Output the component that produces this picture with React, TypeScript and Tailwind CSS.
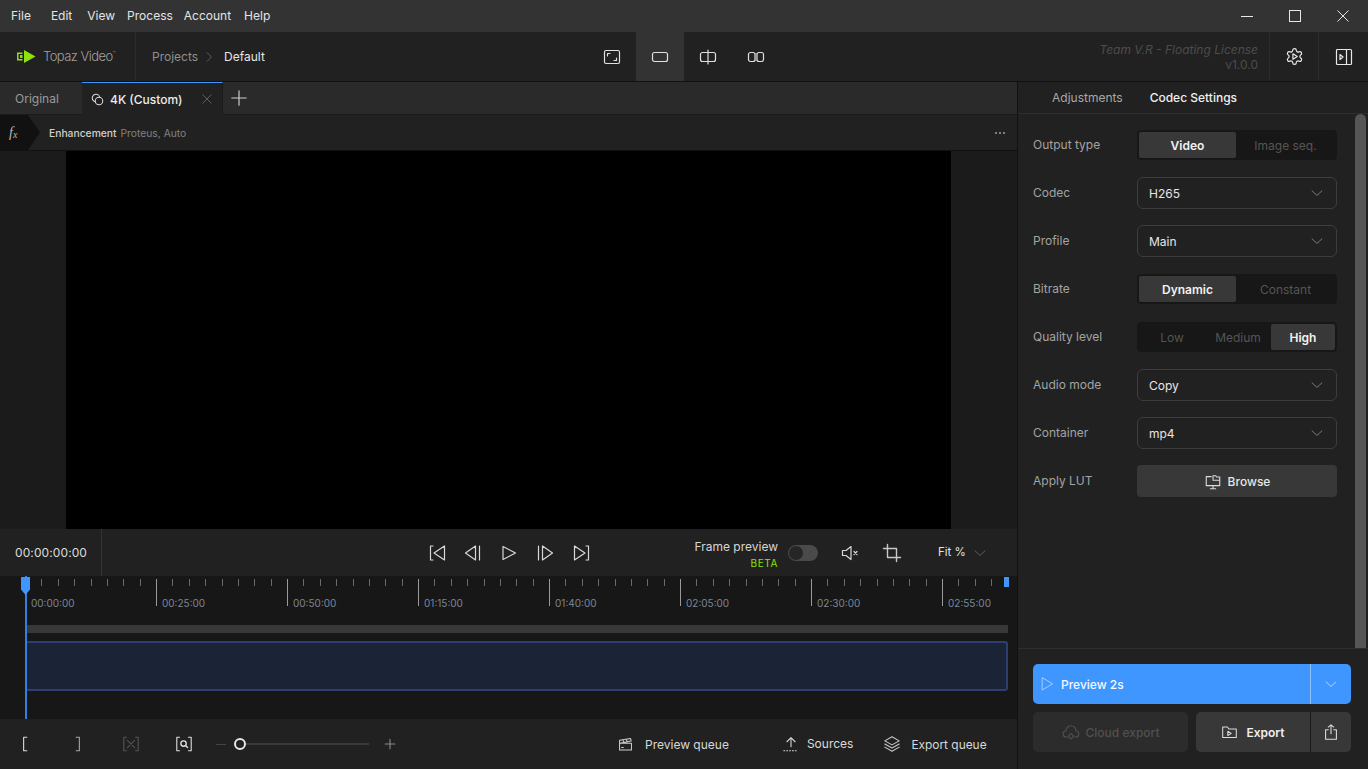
import { ReactNode } from "react";

function Icon({ size = 20, className = "", children }: { size?: number; className?: string; children: ReactNode }) {
  return (
    <svg width={size} height={size} viewBox="0 0 20 20" fill="none" stroke="currentColor" strokeWidth="1.2" strokeLinecap="round" strokeLinejoin="round" className={className}>
      {children}
    </svg>
  );
}

function Chevron({ className = "text-[#8a8a8a]" }: { className?: string }) {
  return (
    <Icon size={14} className={className}>
      <path d="M3 7l7 6.5L17 7" />
    </Icon>
  );
}

function Segmented({ items, active, w }: { items: string[]; active: string; w: string }) {
  return (
    <div className="flex h-[30px] w-[200px] items-center rounded-[4px] bg-[#171717] p-[2px]">
      {items.map((t) =>
        t === active ? (
          <div key={t} className={`flex h-[26px] items-center justify-center rounded-[2px] bg-[#383838] pt-[1px] font-semibold text-[#f2f2f2] ${w}`}>
            {t}
          </div>
        ) : (
          <div key={t} className="flex h-[26px] flex-1 items-center justify-center pt-[1px] text-[#555]">
            {t}
          </div>
        ),
      )}
    </div>
  );
}

function Dropdown({ value }: { value: string }) {
  return (
    <div className="flex h-[32px] w-[200px] items-center justify-between rounded-[6px] border border-[#3d3d3d] pl-[11px] pr-[12px] text-[#e6e6e6]">
      <span className="pt-[1px]">{value}</span>
      <Chevron />
    </div>
  );
}

function Row({ label, children }: { label: string; children: ReactNode }) {
  return (
    <div className="flex h-[48px] items-center pl-[15px]">
      <span className="w-[104px] text-[#a3a3a3]">{label}</span>
      {children}
    </div>
  );
}

const times = ["00:00:00", "00:25:00", "00:50:00", "01:15:00", "01:40:00", "02:05:00", "02:30:00", "02:55:00"];

function RulerCell({ label, first }: { label: string; first: boolean }) {
  return (
    <div className="relative flex h-[29px] w-[131px] shrink-0">
      <div className={`h-[27px] w-[16.375px] border-l ${first ? "border-transparent" : "border-[#9a9a9a]"}`}>
        <div className="whitespace-nowrap pl-[5px] pt-[17px] text-[10px] leading-[14px] text-[#7d8694]">{label}</div>
      </div>
      {[1, 2, 3, 4, 5, 6, 7].map((i) => (
        <div key={i} className="h-[7px] w-[16.375px] border-l border-[#6a6a6a]" />
      ))}
    </div>
  );
}

export default function App() {
  return (
    <div className="flex h-[769px] w-[1368px] flex-col overflow-hidden bg-[#212121] font-['Inter',sans-serif] text-[12px] text-[#e0e0e0]">
      {/* title bar */}
      <div className="flex h-[32px] shrink-0 items-center bg-[#333333] text-[12px] text-[#e4e4e4]">
        <span className="ml-[11px]">File</span>
        <span className="ml-[20px]">Edit</span>
        <span className="ml-[15px]">View</span>
        <span className="ml-[12px]">Process</span>
        <span className="ml-[11px]">Account</span>
        <span className="ml-[13px]">Help</span>
        <div className="ml-auto flex pr-[1px]">
          <div className="flex h-[32px] w-[48px] items-center justify-center">
            <div className="h-[1px] w-[12px] bg-[#e8e8e8]" />
          </div>
          <div className="flex h-[32px] w-[48px] items-center justify-center">
            <div className="h-[12px] w-[12px] border border-[#e8e8e8]" />
          </div>
          <div className="flex h-[32px] w-[48px] items-center justify-center text-[#e8e8e8]">
            <Icon size={14}>
              <path d="M2.5 2.5l15 15M17.5 2.5l-15 15" strokeWidth="1.4" />
            </Icon>
          </div>
        </div>
      </div>

      {/* header */}
      <div className="flex h-[50px] shrink-0 items-center border-b border-[#111]">
        <div className="flex h-full w-[136px] shrink-0 items-center border-r border-[#2c2c2c] pl-[17px]">
          <svg width="19" height="15" viewBox="0 0 19 15" fill="#8fe00c">
            <path d="M7 1L18.500 7.500 7 14z" />
            <path d="M0 3.500h5.500V5H1.500v5h4v1.500H0z" />
            <path d="M3 6h2.500v3H3z" />
          </svg>
          <span className="ml-[7px] pt-[1px] text-[13px] font-light tracking-[-0.55px] text-[#a0a0a0]">Topaz Video</span>
          <span className="mb-[6px] text-[5px] text-[#888]">™</span>
        </div>
        <span className="ml-[16px] pt-[1px] text-[#8f8f8f]">Projects</span>
        <Icon size={12} className="ml-[5px] text-[#777]">
          <path d="M7 3l7 7-7 7" />
        </Icon>
        <span className="ml-[9px] pt-[1px] text-[#e6e6e6]">Default</span>

        <div className="ml-[323px] flex h-full text-[#e0e0e0]">
          <div className="flex w-[48px] items-center justify-center">
            <Icon size={20}>
              <rect x="2.5" y="3.5" width="15" height="13" rx="1.5" />
              <path d="M5.5 9V6.5H8M14.5 11v2.5H12" />
            </Icon>
          </div>
          <div className="flex w-[48px] items-center justify-center bg-[#333333]">
            <Icon size={20}>
              <rect x="2.5" y="5.5" width="15" height="9" rx="2" />
            </Icon>
          </div>
          <div className="flex w-[48px] items-center justify-center">
            <Icon size={20}>
              <path d="M9.5 5.5H4.5a2 2 0 0 0-2 2v5a2 2 0 0 0 2 2h5M11 5.5h4.5a2 2 0 0 1 2 2v5a2 2 0 0 1-2 2H11M10 3v14" />
            </Icon>
          </div>
          <div className="flex w-[48px] items-center justify-center">
            <Icon size={20}>
              <rect x="2.5" y="5.5" width="6.5" height="9" rx="2" />
              <rect x="11" y="5.5" width="6.5" height="9" rx="2" />
              <rect x="9" y="6" width="2" height="8" fill="#9a9a9a" stroke="none" />
            </Icon>
          </div>
        </div>

        <div className="ml-auto flex h-full items-center">
          <div className="pr-[11px] pt-[1px] text-right text-[12px] leading-[15px] text-[#4c4c4c]">
            <div className="italic">Team V.R - Floating License</div>
            <div>v1.0.0</div>
          </div>
          <div className="flex h-full w-[49px] items-center justify-center border-l border-[#2c2c2c] text-[#e8e8e8]">
            <svg width="19" height="19" viewBox="0 0 24 24" fill="none" stroke="currentColor" strokeWidth="1.5" strokeLinejoin="round">
              <path d="M12.22 2h-.44a2 2 0 0 0-2 2v.18a2 2 0 0 1-1 1.73l-.43.25a2 2 0 0 1-2 0l-.15-.08a2 2 0 0 0-2.73.73l-.22.38a2 2 0 0 0 .73 2.73l.15.1a2 2 0 0 1 1 1.72v.51a2 2 0 0 1-1 1.74l-.15.09a2 2 0 0 0-.73 2.73l.22.38a2 2 0 0 0 2.73.73l.15-.08a2 2 0 0 1 2 0l.43.25a2 2 0 0 1 1 1.73V20a2 2 0 0 0 2 2h.44a2 2 0 0 0 2-2v-.18a2 2 0 0 1 1-1.73l.43-.25a2 2 0 0 1 2 0l.15.08a2 2 0 0 0 2.73-.73l.22-.39a2 2 0 0 0-.73-2.73l-.15-.08a2 2 0 0 1-1-1.74v-.5a2 2 0 0 1 1-1.74l.15-.09a2 2 0 0 0 .73-2.73l-.22-.38a2 2 0 0 0-2.73-.73l-.15.08a2 2 0 0 1-2 0l-.43-.25a2 2 0 0 1-1-1.73V4a2 2 0 0 0-2-2z" />
              <path d="M10 8.500l5.500 3.500-5.500 3.500z" />
            </svg>
          </div>
          <div className="flex h-full w-[50px] items-center justify-center border-l border-[#2c2c2c] text-[#e8e8e8]">
            <Icon size={20}>
              <rect x="2.500" y="2.500" width="15" height="15" rx="1" />
              <path d="M12.500 2.500v15M6 7.500L9 10l-3 2.500z" />
            </Icon>
          </div>
        </div>
      </div>

      <div className="flex min-h-0 flex-1">
        {/* left column */}
        <div className="flex w-[1018px] shrink-0 flex-col border-r border-[#111]">
          {/* tabs */}
          <div className="flex h-[33px] shrink-0 items-center bg-[#2a2a2a]">
            <div className="flex h-full w-[82px] items-center border-b border-[#1a1a1a] pl-[15px] pt-[1px] text-[#9a9a9a]">Original</div>
            <div className="flex h-full w-[141px] items-center border-r border-t border-[#1a1a1a] border-t-[#3f96ff] bg-[#212121] pl-[8px] pr-[9px] font-medium text-[#ececec]">
              <Icon size={15} className="text-[#dcdcdc]">
                <circle cx="8" cy="8" r="5" strokeWidth="1.4" />
                <circle cx="12" cy="12" r="5" strokeWidth="1.4" fill="#212121" />
              </Icon>
              <span className="ml-[5px] pt-[1px]">4K (Custom)</span>
              <Icon size={12} className="ml-auto text-[#777]">
                <path d="M3 3l14 14M17 3L3 17" />
              </Icon>
            </div>
            <div className="flex h-full flex-1 items-center border-b border-[#1a1a1a] pl-[7px]">
              <Icon size={18} className="text-[#cfcfcf]">
                <path d="M10 2v16M2 10h16" strokeWidth="1.3" />
              </Icon>
            </div>
          </div>

          {/* enhancement row */}
          <div className="flex h-[36px] shrink-0 items-center border-b border-[#111]">
            <div className="flex h-full w-[40px] items-center bg-[#111111] pl-[9px] italic text-[#b8b8b8] [clip-path:polygon(0_0,70%_0,100%_50%,70%_100%,0_100%)]">
              <span className="font-['Liberation_Serif',serif] text-[14px] leading-none">f</span>
              <span className="mt-[5px] font-['Liberation_Serif',serif] text-[10px] leading-none">x</span>
            </div>
            <span className="ml-[9px] pt-[2px] text-[10.3px] font-medium text-[#d0d0d0]">Enhancement</span>
            <span className="ml-[4px] pt-[2px] text-[10.3px] text-[#828282]">Proteus, Auto</span>
            <div className="ml-auto mr-[12px] flex gap-[2px]">
              <div className="h-[2px] w-[2px] rounded-full bg-[#a0a0a0]" />
              <div className="h-[2px] w-[2px] rounded-full bg-[#a0a0a0]" />
              <div className="h-[2px] w-[2px] rounded-full bg-[#a0a0a0]" />
            </div>
          </div>

          {/* video */}
          <div className="flex h-[378px] shrink-0 justify-center bg-[#1b1b1b]">
            <div className="h-full w-[885px] bg-black" />
          </div>

          {/* transport */}
          <div className="flex h-[47px] shrink-0 items-center">
            <div className="flex h-full w-[102px] items-center border-r border-[#333] pl-[15px] pt-[1px] text-[12px] tracking-[0.1px] text-[#dcdcdc]">00:00:00:00</div>
            <div className="ml-[318px] flex text-[#d8d8d8]">
              <div className="flex w-[36px] justify-center">
                <Icon size={20}>
                  <path d="M5 3H2.500v14H5M16.500 3v14L6 10z" />
                </Icon>
              </div>
              <div className="flex w-[36px] justify-center">
                <Icon size={20}>
                  <path d="M11.500 3v14L1.500 10zM15.500 3v14" />
                </Icon>
              </div>
              <div className="flex w-[36px] justify-center">
                <Icon size={20}>
                  <path d="M3 3.500v13L15.500 10z" />
                </Icon>
              </div>
              <div className="flex w-[36px] justify-center">
                <Icon size={20}>
                  <path d="M2.500 3v14M6.500 3v14L16.500 10z" />
                </Icon>
              </div>
              <div className="flex w-[36px] justify-center">
                <Icon size={20}>
                  <path d="M14 3h2.500v14H14M2.500 3v14L13 10z" />
                </Icon>
              </div>
            </div>
            <div className="ml-[94px] w-[84px] pt-[3px] text-right">
              <div className="leading-[15px] text-[#d6d6d6]">Frame preview</div>
              <div className="mt-[3px] text-[10px] leading-[13px] tracking-[0.6px] text-[#8fe00c]">BETA</div>
            </div>
            <div className="ml-[10px] flex h-[16px] w-[30px] items-center rounded-full bg-[#4a4a4a] pl-[1px]">
              <div className="h-[14px] w-[14px] rounded-full bg-[#262626]" />
            </div>
            <Icon size={20} className="ml-[22px] text-[#d8d8d8]">
              <path d="M2.500 7.500v5H6l5 4V3.500l-5 4zM14 8.500l3 3M17 8.500l-3 3" />
            </Icon>
            <Icon size={20} className="ml-[22px] text-[#c8c8c8]">
              <path d="M5.500 1.500v13h13M1.500 5.500h13v13" strokeWidth="1.4" />
            </Icon>
            <span className="ml-[36px] pt-[1px] text-[11.5px] text-[#e0e0e0]">Fit %</span>
            <Chevron className="ml-[7px] text-[#6a6a6a]" />
          </div>

          {/* timeline */}
          <div className="relative flex h-[143px] shrink-0 flex-col bg-[#171717] pl-[25px]">
            <div className="flex h-[49px] w-[975px] shrink-0 overflow-hidden pt-[3px]">
              {times.map((t, i) => (
                <RulerCell key={t} label={t} first={i === 0} />
              ))}
            </div>
            <div className="h-[8px] w-[983px] bg-[#383838]" />
            <div className="mt-[8px] h-[50px] w-[983px] rounded-[3px] border-2 border-[#2c3f70] bg-[#1b2336]" />

            {/* playhead */}
            <div className="absolute bottom-0 left-[25px] top-0 w-[1.5px] bg-[#2f7fe6]" />
            <div className="absolute left-[21px] top-[1px] h-[18px] w-[9px] bg-[#3f96ff] [clip-path:polygon(0_0,100%_0,100%_70%,50%_100%,0_70%)]" />
            <div className="absolute left-[1004px] top-[1px] h-[10px] w-[5px] bg-[#3f96ff]" />
          </div>

          {/* bottom bar */}
          <div className="flex h-[50px] shrink-0 items-center">
            <Icon size={18} className="ml-[16px] text-[#e0e0e0]">
              <path d="M12 2.500H8.500v15H12" />
            </Icon>
            <Icon size={18} className="ml-[35px] text-[#a8a8a8]">
              <path d="M8 2.500h3.500v15H8" />
            </Icon>
            <Icon size={18} className="ml-[35px] text-[#555]">
              <path d="M5 2.500H2v15h3M15 2.500h3v15h-3M6 6l8 8M14 6l-8 8" />
            </Icon>
            <Icon size={18} className="ml-[35px] text-[#e0e0e0]">
              <path d="M5 2.500H2v15h3M15 2.500h3v15h-3" />
              <circle cx="9.500" cy="9.500" r="3" strokeWidth="1.500" />
              <path d="M12 12l2 2" strokeWidth="1.500" />
            </Icon>
            <div className="ml-[23px] h-[1px] w-[10px] bg-[#444]" />
            <div className="ml-[8px] h-[12px] w-[12px] shrink-0 rounded-full border-2 border-[#e6e6e6]" />
            <div className="h-[2px] w-[123px] bg-[#3a3a3a]" />
            <Icon size={12} className="ml-[15px] text-[#8a8a8a]">
              <path d="M10 2v16M2 10h16" strokeWidth="1.800" />
            </Icon>

            <Icon size={17} className="ml-[221px] text-[#cfcfcf]">
              <path d="M3 8.500h14v8H3zM3 8.500V5l13-2 .7 3L3 8.500zM7 4.500l1 3M11 3.800l1 3M5.500 13.500h2" />
            </Icon>
            <span className="ml-[11px] pt-[2px] text-[#d8d8d8]">Preview queue</span>
            <Icon size={18} className="ml-[53px] text-[#d8d8d8]">
              <path d="M10 13V3M5.500 7.500L10 3l4.500 4.500" />
              <path d="M2 17.500h16" strokeDasharray="1 2.200" />
            </Icon>
            <span className="ml-[7px] text-[#dcdcdc]">Sources</span>
            <Icon size={18} className="ml-[30px] text-[#c8c8c8]">
              <path d="M10 2l8 4.500-8 4.500-8-4.500zM2 10l8 4.500 8-4.500M2 13.500L10 18l8-4.500" />
            </Icon>
            <span className="ml-[10px] pt-[2px] text-[11.9px] text-[#d8d8d8]">Export queue</span>
          </div>
        </div>

        {/* right panel */}
        <div className="flex min-w-0 flex-1 flex-col">
          <div className="flex h-[31px] shrink-0 items-center">
            <span className="ml-[34px] text-[#a8a8a8]">Adjustments</span>
            <span className="ml-[27px] font-medium text-[#f0f0f0]">Codec Settings</span>
          </div>

          <div className="flex min-h-0 flex-1 border-y border-[#2e2e2e]">
            <div className="w-[337px] shrink-0 pt-[7px]">
              <Row label="Output type">
                <Segmented items={["Video", "Image seq."]} active="Video" w="w-[97px]" />
              </Row>
              <Row label="Codec">
                <Dropdown value="H265" />
              </Row>
              <Row label="Profile">
                <Dropdown value="Main" />
              </Row>
              <Row label="Bitrate">
                <Segmented items={["Dynamic", "Constant"]} active="Dynamic" w="w-[97px]" />
              </Row>
              <Row label="Quality level">
                <Segmented items={["Low", "Medium", "High"]} active="High" w="w-[64px]" />
              </Row>
              <Row label="Audio mode">
                <Dropdown value="Copy" />
              </Row>
              <Row label="Container">
                <Dropdown value="mp4" />
              </Row>
              <Row label="Apply LUT">
                <div className="flex h-[32px] w-[200px] items-center justify-center gap-[6px] rounded-[4px] bg-[#383838] pt-[1px] font-medium text-[#e6e6e6]">
                  <Icon size={18} className="text-[#dcdcdc]">
                    <path d="M8 4H2.500v10h15V8M7 17.500h6M10 14v3.500M10 7V3h3l1 1.500h3.500V8H10" />
                  </Icon>
                  Browse
                </div>
              </Row>
            </div>
            <div className="w-[11px] rounded-t-full bg-[#555555]" />
          </div>

          <div className="flex h-[120px] shrink-0 flex-col gap-[8px] pl-[15px] pt-[15px]">
            <div className="flex h-[40px] w-[318px] items-center rounded-[5px] bg-[#3f96ff] font-medium text-[#f4f8ff]">
              <Icon size={16} className="ml-[6px] text-[#a9cffb]">
                <path d="M4 2.500v15L16.500 10z" />
              </Icon>
              <span className="ml-[6px] pt-[1px]">Preview 2s</span>
              <div className="ml-auto flex h-full w-[41px] items-center justify-center border-l border-[#8fc2fc] text-[#c8e0fd]">
                <Chevron className="text-[#c8e0fd]" />
              </div>
            </div>
            <div className="flex gap-[8px]">
              <div className="flex h-[40px] w-[155px] items-center justify-center gap-[6px] rounded-[5px] bg-[#2c2c2c] pt-[1px] font-medium text-[#505050]">
                <Icon size={18} className="text-[#505050]">
                  <path d="M6 14.500H5a3.500 3.500 0 0 1-.5-7 5.500 5.500 0 0 1 11 0 3.500 3.500 0 0 1-.5 7h-1M10 10.500l3 3-3 3-3-3z" />
                </Icon>
                Cloud export
              </div>
              <div className="flex h-[40px] w-[155px]">
                <div className="flex h-full w-[114px] items-center justify-center gap-[8px] rounded-l-[5px] bg-[#383838] pt-[1px] font-semibold text-[#efefef]">
                  <Icon size={17} className="text-[#dcdcdc]">
                    <path d="M2 16V3.500h5.500L9.500 6H18v10zM8 8.500v5l4-2.500z" />
                  </Icon>
                  Export
                </div>
                <div className="flex h-full flex-1 items-center justify-center rounded-r-[5px] border-l border-[#1a1a1a] bg-[#383838] text-[#dcdcdc]">
                  <Icon size={18}>
                    <path d="M7 7.500H4V18h12V7.500h-3M10 12V2M7 4.500L10 2l3 2.500" />
                  </Icon>
                </div>
              </div>
            </div>
          </div>
        </div>
      </div>
    </div>
  );
}
